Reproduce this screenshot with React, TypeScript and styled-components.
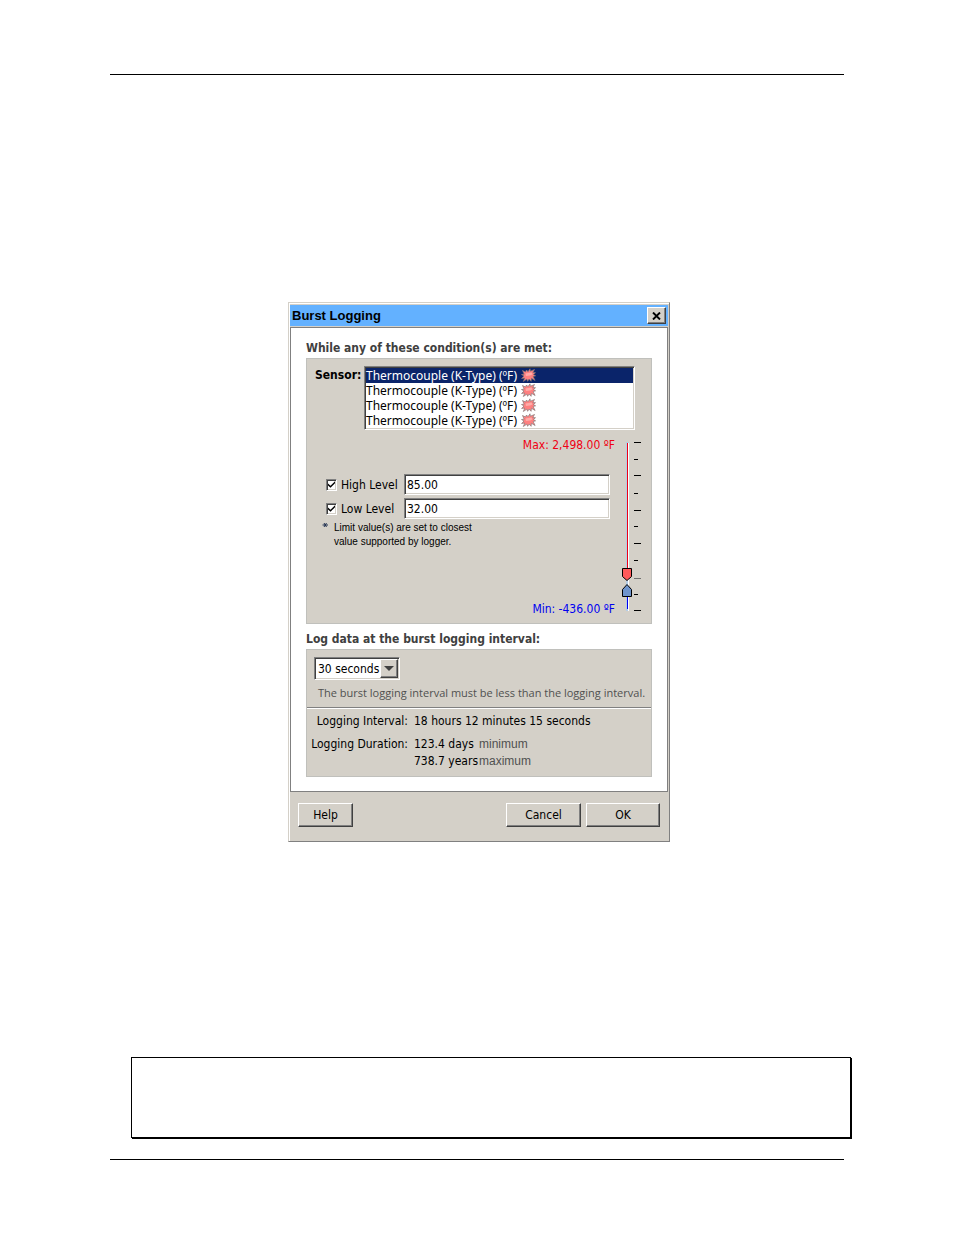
import React, { useState } from "react";
import styled, { createGlobalStyle, css } from "styled-components";

const FACE = "#d4d0c8";
const SHADOW = "#808080";
const DARK = "#404040";
const TAHOMA = `Tahoma, "DejaVu Sans Condensed", "DejaVu Sans", sans-serif`;
const ARIAL = `"Liberation Sans", Arial, sans-serif`;

const GlobalStyle = createGlobalStyle`
  *, *::before, *::after { box-sizing: border-box; }
  body { margin: 0; background: #fff; color: #000; font: 12px/16px ${TAHOMA}; }
  button, input, select { font: inherit; color: inherit; margin: 0; }
`;

const raised = css`
  border: 1px solid;
  border-color: #fff ${DARK} ${DARK} #fff;
  box-shadow: inset -1px -1px ${SHADOW};
  background: ${FACE};
`;

const sunken = css`
  border: 1px solid;
  border-color: ${SHADOW} #fff #fff ${SHADOW};
  box-shadow: inset 1px 1px ${DARK}, inset -1px -1px ${FACE};
  background: #fff;
`;

const Page = styled.main`
  display: flex;
  flex-direction: column;
  min-height: 100vh;
  padding: 74px 110px 75px;
`;

const Rule = styled.hr`
  width: 100%;
  height: 1px;
  margin: 0;
  border: 0;
  background: #000;
`;

const Figure = styled.section`
  display: flex;
  justify-content: center;
  padding: 227px 0 215px 4px;
`;

const NoteBox = styled.aside`
  height: 81px;
  margin: 0 -7px 21px 21px;
  border: 1px solid #000;
  box-shadow: 1px 1px #000;
`;

const Dialog = styled.div`
  width: 382px;
  padding: 2px 1px 0;
  border: 1px solid;
  border-color: ${FACE} ${SHADOW} ${SHADOW} ${FACE};
  box-shadow: inset 1px 1px #fff;
  background: ${FACE};
`;

const TitleBar = styled.header`
  display: flex;
  align-items: center;
  justify-content: space-between;
  height: 21px;
  margin-bottom: 1px;
  padding: 0 2px;
  background: #63b1ff;
`;

const Title = styled.h1`
  margin: 0;
  font: bold 13px/20px ${ARIAL};
`;

const CloseButton = styled.button`
  ${raised}
  display: flex;
  align-items: center;
  justify-content: center;
  width: 19px;
  height: 17px;
  padding: 0;
`;

const Panel = styled.div`
  padding: 10px 15px 14px;
  border: 1px solid ${SHADOW};
  background: #fff;
`;

const Heading = styled.h2`
  margin: 0;
  color: #404040;
  font: bold 12px/20px ${TAHOMA};
`;

const Group = styled.div`
  margin-bottom: 5px;
  border: 1px solid #c0c0bc;
  background: ${FACE};
  &:last-child { margin-bottom: 0; }
`;

const SensorRow = styled.div`
  display: flex;
  justify-content: space-between;
  padding: 7px 16px 0 8px;
`;

const SensorLabel = styled.span`
  font-weight: bold;
  line-height: 18px;
`;

const SensorList = styled.div`
  ${sunken}
  width: 271px;
  padding: 1px;
`;

const SensorItem = styled.label`
  display: flex;
  align-items: center;
  gap: 4px;
  height: 15px;
  font-family: "Noto Sans", sans-serif;
  white-space: nowrap;
  &:has(input:checked) { background: #0a246a; color: #fff; }
`;

const HiddenInput = styled.input`
  position: absolute;
  opacity: 0;
  width: 1px;
  height: 1px;
`;

const LevelArea = styled.div`
  display: flex;
  justify-content: space-between;
  height: 193px;
  padding: 7px 9px 6px 15px;
`;

const LevelColumn = styled.div`
  display: flex;
  flex-direction: column;
  width: 293px;
`;

const Bound = styled.div<{ $color: string }>`
  color: ${(p) => p.$color};
  text-align: right;
`;

const LevelFields = styled.div`
  display: flex;
  flex-direction: column;
  gap: 3px;
  margin-top: 21px;
  padding: 0 5px 0 4px;
`;

const LevelRow = styled.div`
  display: flex;
  align-items: center;
  justify-content: space-between;
`;

const CheckLabel = styled.label`
  display: flex;
  align-items: center;
  gap: 4px;
`;

const CheckBox = styled.input`
  ${sunken}
  appearance: none;
  display: grid;
  place-content: center;
  width: 11px;
  height: 12px;
  &:checked::before {
    content: "";
    width: 7px;
    height: 7px;
    background: #000;
    clip-path: polygon(0 36%, 36% 68%, 100% 4%, 100% 32%, 36% 98%, 0 64%);
  }
`;

const TextBox = styled.input`
  ${sunken}
  width: 206px;
  height: 21px;
  padding: 0 2px;
`;

const Hint = styled.div`
  display: flex;
  gap: 5px;
  margin: 2px 0 auto;
  font: 10px/14px ${ARIAL};
`;

const SliderBox = styled.div`
  position: relative;
  width: 22px;
  height: 174px;
  margin-top: 3px;
`;

const RangeInput = styled.input<{ $low?: boolean }>`
  position: absolute;
  left: 0;
  top: ${(p) => (p.$low ? "142px" : "0")};
  width: 12px;
  height: ${(p) => (p.$low ? "30px" : "142px")};
  opacity: 0;
  writing-mode: vertical-lr;
  direction: rtl;
`;

const IntervalArea = styled.div`
  padding: 7px 7px 6px;
`;

const SelectFrame = styled.div`
  ${sunken}
  display: inline-grid;
  grid-template-columns: 64px 18px;
  width: 86px;
  height: 23px;
  padding: 1px;
  vertical-align: top;
`;

const IntervalSelect = styled.select`
  grid-area: 1 / 1 / 2 / 3;
  appearance: none;
  padding: 0 2px;
  border: 0;
  background: transparent;
`;

const SelectArrow = styled.span`
  ${raised}
  grid-area: 1 / 2 / 2 / 3;
  display: flex;
  align-items: center;
  justify-content: center;
  pointer-events: none;
`;

const IntervalNote = styled.p`
  margin: 5px 0 0 4px;
  color: #505050;
  font: 11px/16px "Open Sans", ${ARIAL};
  white-space: nowrap;
`;

const Divider = styled.hr`
  height: 2px;
  margin: 0;
  border: 0;
  border-top: 1px solid ${SHADOW};
  background: #fff;
`;

const Facts = styled.dl`
  display: grid;
  grid-template-columns: 101px 65px 1fr;
  row-gap: 1px;
  margin: 0;
  padding: 4px 0 7px;
`;

const Term = styled.dt`
  text-align: right;
`;

const Value = styled.dd<{ $wide?: boolean }>`
  grid-column: ${(p) => (p.$wide ? "2 / 4" : "2")};
  margin: 0;
  padding-left: 6px;
  white-space: nowrap;
`;

const Qualifier = styled.dd`
  margin: 0;
  padding-left: 6px;
  color: #505050;
  font-family: ${ARIAL};
`;

const FactGap = styled.div`
  grid-column: 1 / 4;
  height: 5px;
`;

const Footer = styled.footer`
  display: flex;
  gap: 5px;
  padding: 11px 8px 14px;
`;

const PushButton = styled.button<{ $width: number; $first?: boolean }>`
  ${raised}
  width: ${(p) => p.$width}px;
  height: 24px;
  margin-right: ${(p) => (p.$first ? "auto" : "0")};
  padding: 0;
`;

const BurstIcon = () => (
  <svg width="15" height="15" viewBox="0 0 15 15" aria-hidden="true">
    <path
      d="M1.500 2.500l3 1.500L5.500 2l1.500 1.700L9 0.800l0.400 2.400L13.500 1.500l-1.700 3 2.700 0.200-2.200 1.800 2.300 1.300-2.500 0.700 2 4-3.700-2.200-0.300 3-2-2.200-1.500 2.200-0.700-2.200-3.600 2.400 1.500-3.500-3.200 0.500L3 8 0.500 6.500l2.700-0.300z"
      fill="#ff8080"
      stroke="#857878"
      strokeWidth="0.7"
    />
    <path d="M4.500 5.500l6-1 1 2-2.500 1-4 0.500z" fill="#ffaca8" />
  </svg>
);

const TICKS = [2, 19, 35, 53, 70, 86, 103, 120, 138, 154, 170];

const SliderDrawing = () => (
  <svg width="22" height="174" viewBox="0 0 22 174" shapeRendering="crispEdges" aria-hidden="true">
    <rect x="6" y="2" width="3" height="169" fill="#b4cde6" />
    <rect x="8" y="3" width="1" height="168" fill="#fff" />
    <rect x="7" y="3" width="1" height="126" fill="#f00014" />
    <rect x="7" y="157" width="1" height="12" fill="#0000f0" />
    {TICKS.map((y, i) => (
      <rect key={y} x="14" y={y} width={i % 2 ? 4 : 7} height="1" fill={i === 8 ? "#707070" : "#000"} />
    ))}
    <g shapeRendering="auto" stroke="#000">
      <path d="M2.500 128.500h9v8l-4.500 4-4.500-4z" fill="#ff5a5a" />
      <path d="M2.500 156.500h9v-7l-4.500-5-4.500 5z" fill="#6e94cc" />
    </g>
  </svg>
);

const SENSORS = [1, 2, 3, 4];

export default function App() {
  const [sensor, setSensor] = useState(1);
  return (
    <Page>
      <GlobalStyle />
      <Rule />
      <Figure>
        <Dialog role="dialog" aria-labelledby="dialog-title">
          <TitleBar>
            <Title id="dialog-title">Burst Logging</Title>
            <CloseButton type="button" aria-label="Close">
              <svg width="9" height="8" viewBox="0 0 9 8" aria-hidden="true">
                <path d="M1 0.500l7 7M8 0.500l-7 7" stroke="#000" strokeWidth="1.900" />
              </svg>
            </CloseButton>
          </TitleBar>
          <Panel>
            <Heading>While any of these condition(s) are met:</Heading>
            <Group>
              <SensorRow>
                <SensorLabel id="sensor-label">Sensor:</SensorLabel>
                <SensorList role="radiogroup" aria-labelledby="sensor-label">
                  {SENSORS.map((id) => (
                    <SensorItem key={id}>
                      <HiddenInput type="radio" name="sensor" checked={sensor === id} onChange={() => setSensor(id)} />
                      Thermocouple (K-Type) (ºF)
                      <BurstIcon />
                    </SensorItem>
                  ))}
                </SensorList>
              </SensorRow>
              <LevelArea>
                <LevelColumn>
                  <Bound $color="#f00014">Max: 2,498.00 ºF</Bound>
                  <LevelFields>
                    <LevelRow>
                      <CheckLabel>
                        <CheckBox type="checkbox" defaultChecked />
                        High Level
                      </CheckLabel>
                      <TextBox type="text" defaultValue="85.00" aria-label="High Level" />
                    </LevelRow>
                    <LevelRow>
                      <CheckLabel>
                        <CheckBox type="checkbox" defaultChecked />
                        Low Level
                      </CheckLabel>
                      <TextBox type="text" defaultValue="32.00" aria-label="Low Level" />
                    </LevelRow>
                  </LevelFields>
                  <Hint>
                    <svg width="7" height="11" viewBox="0 0 7 11" aria-hidden="true">
                      <path d="M0.500 4h5.500M2 2l2.500 4M4.500 2L2 6" fill="none" stroke="#203050" strokeWidth="1" />
                    </svg>
                    <span>
                      Limit value(s) are set to closest
                      <br />
                      value supported by logger.
                    </span>
                  </Hint>
                  <Bound $color="#0000f0">Min: -436.00 ºF</Bound>
                </LevelColumn>
                <SliderBox>
                  <SliderDrawing />
                  <RangeInput type="range" min={-436} max={2498} defaultValue={85} aria-label="High level limit" />
                  <RangeInput $low type="range" min={-436} max={2498} defaultValue={32} aria-label="Low level limit" />
                </SliderBox>
              </LevelArea>
            </Group>
            <Heading>Log data at the burst logging interval:</Heading>
            <Group>
              <IntervalArea>
                <SelectFrame>
                  <IntervalSelect aria-label="Burst logging interval">
                    <option>30 seconds</option>
                  </IntervalSelect>
                  <SelectArrow>
                    <svg width="10" height="5" viewBox="0 0 10 5" aria-hidden="true">
                      <path d="M0 0h10L5 5z" fill="#404040" />
                    </svg>
                  </SelectArrow>
                </SelectFrame>
                <IntervalNote>The burst logging interval must be less than the logging interval.</IntervalNote>
              </IntervalArea>
              <Divider />
              <Facts>
                <Term>Logging Interval:</Term>
                <Value $wide>18 hours 12 minutes 15 seconds</Value>
                <FactGap />
                <Term>Logging Duration:</Term>
                <Value>123.4 days</Value>
                <Qualifier>minimum</Qualifier>
                <Value>738.7 years</Value>
                <Qualifier>maximum</Qualifier>
              </Facts>
            </Group>
          </Panel>
          <Footer>
            <PushButton type="button" $width={55} $first>Help</PushButton>
            <PushButton type="button" $width={75}>Cancel</PushButton>
            <PushButton type="button" $width={74}>OK</PushButton>
          </Footer>
        </Dialog>
      </Figure>
      <NoteBox />
      <Rule />
    </Page>
  );
}
